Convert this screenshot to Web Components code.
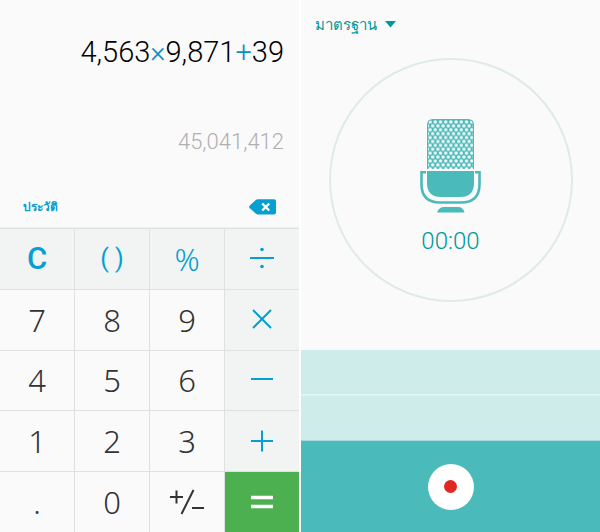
<!DOCTYPE html>
<html lang="th">
<head>
<meta charset="utf-8">
<meta name="viewport" content="width=device-width, initial-scale=1">
<title>Calculator and voice recorder</title>
<style>
html, body { height: 100%; }
body { margin: 0; background: #fff; font-family: Roboto, "Noto Sans", sans-serif; }
</style>
</head>
<body>
<app-pair>
  <calc-panel>
    <calc-display slot="display"></calc-display>
    <calc-key kind="fn" face="clear" label="ล้าง"><b>C</b></calc-key>
    <calc-key kind="fn" face="parens" label="วงเล็บ">( )</calc-key>
    <calc-key kind="fn" label="เปอร์เซ็นต์">%</calc-key>
    <calc-key kind="op" label="หาร" icon="divide"></calc-key>
    <calc-key>7</calc-key><calc-key>8</calc-key><calc-key>9</calc-key>
    <calc-key kind="op" label="คูณ" icon="times"></calc-key>
    <calc-key>4</calc-key><calc-key>5</calc-key><calc-key>6</calc-key>
    <calc-key kind="op" label="ลบ" icon="minus"></calc-key>
    <calc-key>1</calc-key><calc-key>2</calc-key><calc-key>3</calc-key>
    <calc-key kind="op" label="บวก" icon="plus"></calc-key>
    <calc-key>.</calc-key><calc-key>0</calc-key>
    <calc-key label="บวกลบ" icon="sign"></calc-key>
    <calc-key kind="equals" label="เท่ากับ" icon="equals"></calc-key>
  </calc-panel>
  <voice-recorder></voice-recorder>
</app-pair>
<script>
class BaseElement extends HTMLElement {
  connectedCallback() {
    if (this.shadowRoot) return;
    this.attachShadow({ mode: "open" }).innerHTML = this.view();
  }
}

customElements.define("app-pair", class extends BaseElement {
  view() {
    return `<style>
      :host { display: grid; grid-template-columns: 1fr 1fr; gap: 2px; min-height: 100vh; }
    </style><slot></slot>`;
  }
});

customElements.define("calc-panel", class extends BaseElement {
  view() {
    return `<style>
      :host { display: grid; grid-template-rows: 228fr 304fr; background: #fafafa; min-width: 0; }
      .keys { display: grid; grid-template-columns: repeat(4, 1fr); grid-auto-rows: 1fr;
        gap: 1px; background: #dfe1e1; border-top: 1px solid #dfe1e1; box-shadow: 0 -1px 1px #eeefef; }
    </style><slot name="display"></slot><div class="keys"><slot></slot></div>`;
  }
});

customElements.define("calc-display", class extends BaseElement {
  view() {
    return `<style>
      :host { display: flex; flex-direction: column; padding: 32px 15px 7px 23px; box-sizing: border-box; }
      output { text-align: right; font-weight: 300; }
      .expr { font-size: 29px; line-height: 40px; color: #000; }
      .expr span { color: #0b8fc0; }
      .result { margin-top: 56px; font-size: 22px; line-height: 28px; color: #b0b0b0; }
      .tools { margin-top: auto; display: flex; justify-content: space-between; align-items: center; height: 28px; padding-right: 8px; }
      button { border: 0; padding: 0; background: none; color: #069fd1; font: 700 12px/20px "Noto Sans", sans-serif; cursor: pointer; }
      svg { display: block; }
    </style>
    <output class="expr">4,563<span>×</span>9,871<span>+</span>39</output>
    <output class="result">45,041,412</output>
    <div class="tools">
      <button>ประวัติ</button>
      <button aria-label="ลบตัวอักษร"><svg width="27" height="16" viewBox="0 0 27 16">
        <path d="M7 .8 Q7.900 .3 9 .3H25Q27 .3 27 2.300V13.400Q27 15.400 25 15.400H9Q7.900 15.400 7 14.700L.6 9Q-.3 7.900.6 6.800Z" fill="#069fd1"/>
        <path d="M13.200 4.500l7 7M20.200 4.500l-7 7" stroke="#fff" stroke-width="2.400"/>
      </svg></button>
    </div>`;
  }
});

const KEY_ICONS = {
  divide: `<path d="M6 17H30" stroke-width="2"/><circle cx="18" cy="8.500" r="1.800" fill="currentColor" stroke="none"/><circle cx="18" cy="25.500" r="1.800" fill="currentColor" stroke="none"/>`,
  times: `<path d="M9 8L27 26M27 8L9 26" stroke-width="2"/>`,
  minus: `<path d="M7 17H29" stroke-width="2"/>`,
  plus: `<path d="M7 18H29M18 7.500V28.500" stroke-width="2"/>`,
  equals: `<path d="M7 13.500H29M7 22.500H29" stroke-width="3.500"/>`,
  sign: `<path d="M1 13H14M7.500 6.500V19.500M24.500 6L12.500 30M23 24H35" stroke-width="2"/>`
};

customElements.define("calc-key", class extends BaseElement {
  view() {
    const label = this.getAttribute("label");
    const icon = this.getAttribute("icon");
    const face = icon ? `<svg width="36" height="36" viewBox="0 0 36 36" fill="none" stroke="currentColor">${KEY_ICONS[icon]}</svg>` : `<slot></slot>`;
    return `<style>
      :host { display: grid; background: #fafafa; color: #333; }
      :host([kind="fn"]), :host([kind="op"]) { background: #f2f4f4; color: #069fd1; }
      :host([kind="equals"]) { background: #4caf50; color: #fff; }
      button { display: grid; place-items: center; min-width: 0; border: 0; padding: 0; background: none; color: inherit;
        font: 300 31px/36px "Noto Sans", sans-serif; cursor: pointer; }
      :host([face="clear"]) button { font-family: Roboto, sans-serif; }
      :host([face="parens"]) button { font: 400 25px/36px Roboto, sans-serif; }
      ::slotted(b) { font-weight: 500; }
      svg { display: block; }
    </style><button${label ? ` aria-label="${label}"` : ""}>${face}</button>`;
  }
});

customElements.define("mic-icon", class extends BaseElement {
  view() {
    return `<style>:host { display: block; } svg { display: block; }</style>
    <svg width="62" height="94" viewBox="0 0 62 94" aria-hidden="true">
      <defs><pattern id="mesh" width="5.200" height="7.800" patternUnits="userSpaceOnUse" x="7.500" y="1">
        <circle cx="2.600" cy="1.900" r="1.700" fill="#fafafa"/>
        <circle cx="0" cy="5.800" r="1.700" fill="#fafafa"/><circle cx="5.200" cy="5.800" r="1.700" fill="#fafafa"/>
      </pattern></defs>
      <path d="M7 50V6Q7 0 13 0H48Q54 0 54 6V50Z" fill="#4bbaba"/>
      <path d="M8 50V6Q8 1 13 1H48Q53 1 53 6V50Z" fill="url(#mesh)"/>
      <path d="M7 52H54V64Q54 78 40 78H21Q7 78 7 64Z" fill="#4bbaba"/>
      <path d="M6 53.200H1.500V65Q1.500 83.500 20 83.500H41Q59.500 83.500 59.500 65V53.200H55" fill="none" stroke="#4bbaba" stroke-width="2.600"/>
      <path d="M17 93.500Q19 88 24 88H38Q43 88 44.500 93.500Z" fill="#4bbaba"/>
    </svg>`;
  }
});

customElements.define("voice-recorder", class extends BaseElement {
  view() {
    return `<style>
      :host { display: grid; grid-template-rows: 350fr 91fr 91fr; background: #fafafa; min-width: 0; }
      .stage { display: flex; flex-direction: column; align-items: center; }
      .mode { align-self: flex-start; display: flex; align-items: center; gap: 8px; padding: 12px 0 0 14px; color: #00989a; }
      select { appearance: none; border: 0; padding: 0; background: none; color: inherit; font: 400 15px/24px "Noto Sans", sans-serif; cursor: pointer; }
      .mode svg { display: block; }
      .dial { box-sizing: border-box; margin-top: 22px; width: 244px; aspect-ratio: 1; border: 2px solid #dfeaea; border-radius: 50%;
        display: flex; flex-direction: column; align-items: center; padding-top: 59px; }
      time { margin-top: 12px; font-weight: 300; font-size: 24px; line-height: 32px; color: #00989a; }
      .wave { display: flex; flex-direction: column; justify-content: center; background: #cdecea; border-bottom: 1px solid #a5dada; box-sizing: border-box; }
      .wave i { border-top: 1px solid #e3f6f6; border-bottom: 1px dotted #e3f6f6; }
      .bar { display: grid; place-items: center; background: #4bbaba; }
      .rec { width: 46px; height: 46px; border: 0; padding: 0; border-radius: 50%; background: #fff; display: grid; place-items: center; cursor: pointer; }
      .rec i { width: 13px; height: 13px; border-radius: 50%; background: #e02822; }
    </style>
    <div class="stage">
      <label class="mode"><select aria-label="โหมดบันทึก"><option>มาตรฐาน</option></select>
        <svg width="11" height="7" viewBox="0 0 11 7"><path d="M0 0H11L5.500 6.500Z" fill="currentColor"/></svg></label>
      <div class="dial"><mic-icon></mic-icon><time>00:00</time></div>
    </div>
    <div class="wave"><i></i></div>
    <div class="bar"><button class="rec" aria-label="บันทึก"><i></i></button></div>`;
  }
});
</script>
</body>
</html>
